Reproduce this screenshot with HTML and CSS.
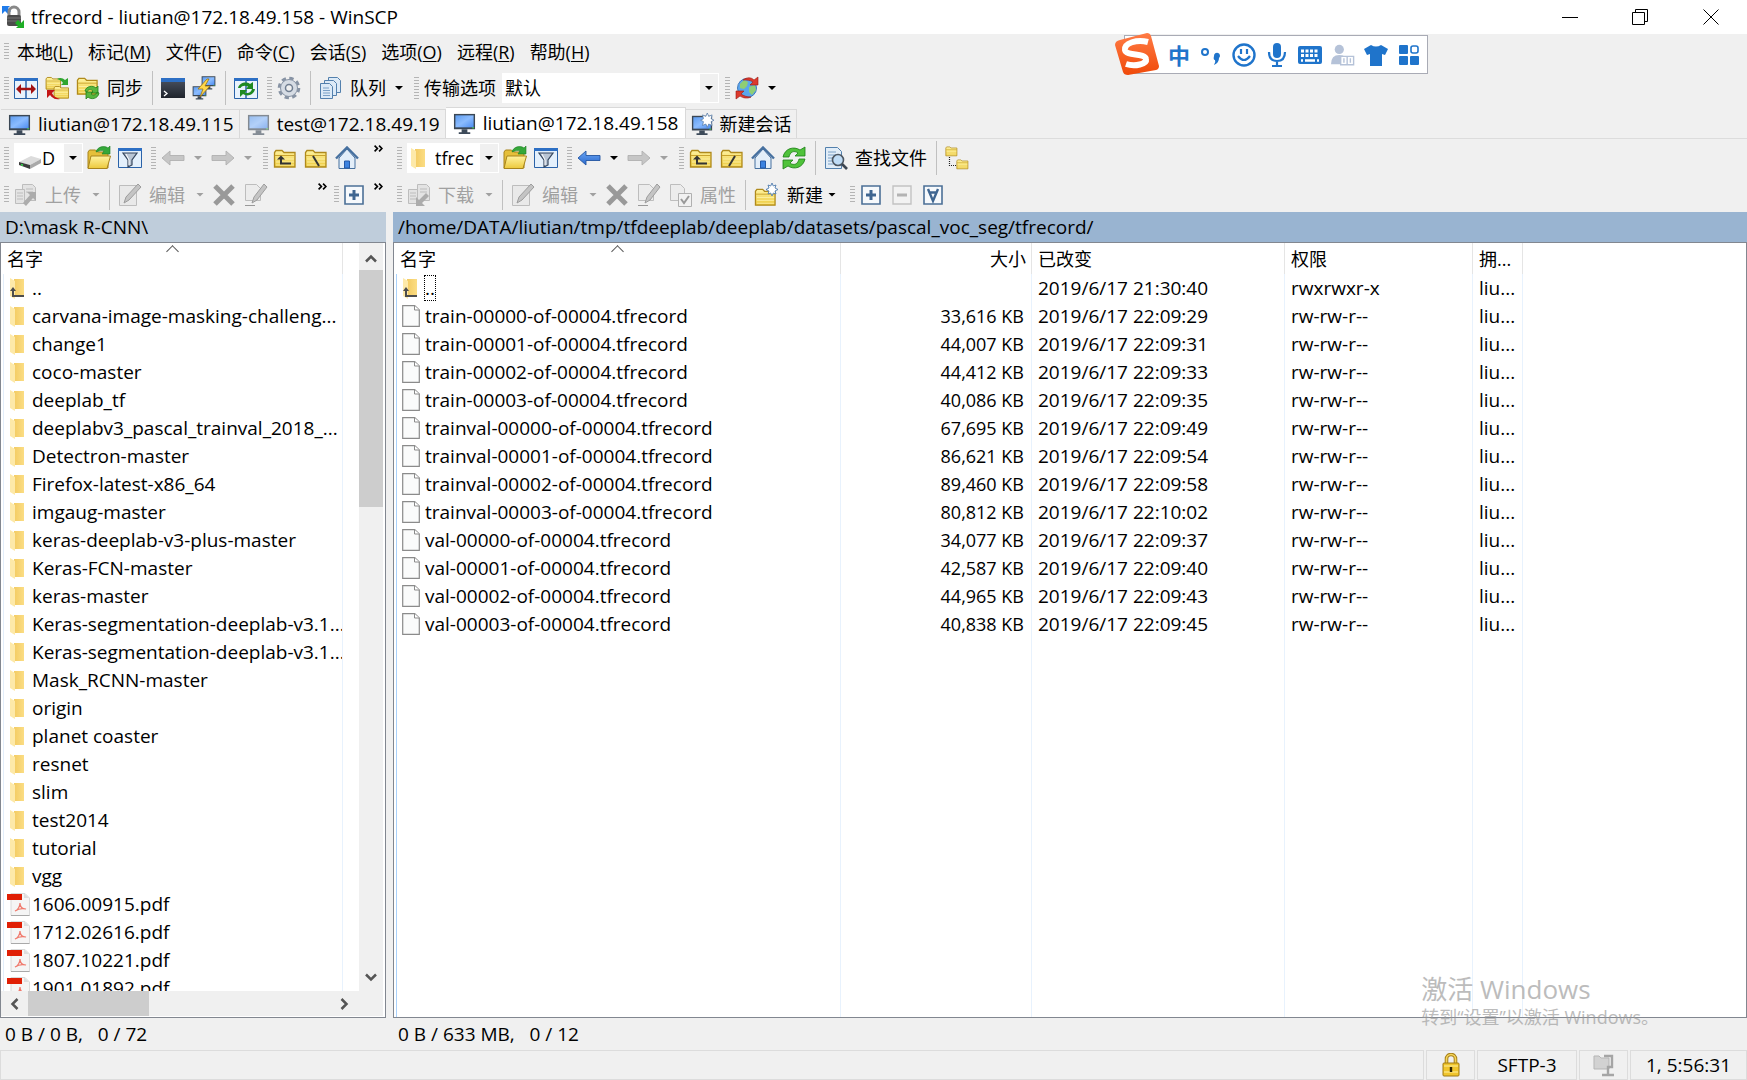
FILE: index.html
```html
<!DOCTYPE html>
<html lang="zh-CN">
<head>
<meta charset="utf-8">
<title>tfrecord - liutian@172.18.49.158 - WinSCP</title>
<link rel="stylesheet" href="styles.css">
</head>
<body>
<svg class="sprite" aria-hidden="true">
  <defs>
    <linearGradient id="gold" x1="0" y1="0" x2="0" y2="1"><stop offset="0" stop-color="#fff3a0"/><stop offset="1" stop-color="#ecc93c"/></linearGradient>
    <linearGradient id="screen" x1="0" y1="0" x2="1" y2="1"><stop offset="0" stop-color="#5f9df0"/><stop offset=".5" stop-color="#8bbcff"/><stop offset="1" stop-color="#4d8df0"/></linearGradient>
    <linearGradient id="flap" x1="0" y1="0" x2="1" y2="0"><stop offset="0" stop-color="#f3cb62"/><stop offset="1" stop-color="#fbdd84"/></linearGradient>
    <linearGradient id="sogou" x1="0" y1="0" x2="0" y2="1"><stop offset="0" stop-color="#ff7b45"/><stop offset="1" stop-color="#f04a0a"/></linearGradient>
    <linearGradient id="night" x1="0" y1="0" x2="0" y2="1"><stop offset="0" stop-color="#4a5260"/><stop offset="1" stop-color="#1f242c"/></linearGradient>
    <linearGradient id="blue" x1="0" y1="0" x2="0" y2="1"><stop offset="0" stop-color="#6aa6f5"/><stop offset="1" stop-color="#2a68cc"/></linearGradient>
  </defs>
  <symbol id="i-app" viewBox="0 0 24 24"><path d="M1 1h8L7 3l3 3-3 3-3-3-3 3z" fill="#1f7bea"/><path d="M8 11V7a5 5 0 0 1 10 0v4" fill="none" stroke="#888" stroke-width="3"/><rect x="6" y="10" width="14" height="11" rx="2" fill="#4c4c4c"/><path d="M6 13h14M6 16h14" stroke="#777"/><path d="M23 23h-8l2-2-3-3 3-3 3 3 3-3z" fill="#1fae26"/></symbol>
  <symbol id="i-compare" viewBox="0 0 24 24"><path d="M.5 2.500h23v20H.5z" fill="#e9f3fd" stroke="#2a62a8"/><path d="M0 2h24v3H0z" fill="#2d6fc4"/><path d="M12 5v18" stroke="#2a62a8" stroke-width="1.500"/><path d="M2 13l5-5v3.800h10V8l5 5-5 5v-3.800H7V18z" fill="#a31212"/></symbol>
  <symbol id="g-folder" viewBox="0 0 24 24"><path d="M1.500 20V5.500l1.500-2h6l2 2h11V20z" fill="url(#gold)" stroke="#b08a1c" stroke-width="1.300"/><path d="M2 8.500h20" stroke="#c9a32e"/><path d="M3 12h18M3 15h18M3 18h18" stroke="#fff6b8" stroke-width=".7"/></symbol>
  <symbol id="i-syncdir" viewBox="0 0 24 24"><use href="#g-folder" x="0" y="-1" width="17" height="17"/><use href="#g-folder" x="8" y="8" width="17" height="17"/><path d="M12 3c3-2 6-1 8 1l3-2v7h-7l2-2c-1-2-3-3-6-4z" fill="#2fa52f"/><path d="M15 23c-4 1-8-1-10-4l-3 3v-8h8l-3 3c1 3 4 5 8 6z" fill="#c41616"/></symbol>
  <symbol id="i-sync" viewBox="0 0 24 24"><use href="#g-folder" y="-1" width="23" height="23"/><path d="M9 15c1-5 8-6 11-3l2-2v7h-7l2-2c-2-2-5-2-6 1zM23 17c-1 6-8 7-11 4l-2 2v-7h7l-2 2c2 2 5 1 6-2z" fill="#58b63f" stroke="#24821d" stroke-width=".8"/></symbol>
  <symbol id="i-term" viewBox="0 0 24 24"><path d="M0 3h24v19H0z" fill="url(#night)"/><path d="M0 2h24v4H0z" fill="#2d6fc4"/><path d="M3 15l3 2.500-3 2.500" fill="none" stroke="#fff" stroke-width="1.300"/></symbol>
  <symbol id="i-monitor" viewBox="0 0 24 24"><path d="M1 2h22v16H1z" fill="#3b4754"/><path d="M2.500 3.500h19v12.500h-19z" fill="url(#screen)"/><path d="M9 18h6v3h3v2H6v-2h3z" fill="#3d4a59"/><path d="M20 16.500h2" stroke="#4be04b"/></symbol>
  <symbol id="i-putty" viewBox="0 0 24 24"><use href="#i-monitor" x="9" y="-1" width="15" height="15"/><use href="#i-monitor" x="0" y="9" width="15" height="15"/><path d="M15 3L6 13h5l-3 8 10-11h-5l4-7z" fill="#ffd84a" stroke="#9a7415" stroke-width=".8"/></symbol>
  <symbol id="i-refreshall" viewBox="0 0 24 24"><path d="M.5 2.500h23v20H.5z" fill="#e9f3fd" stroke="#2a62a8"/><path d="M0 2h24v3H0z" fill="#2d6fc4"/><path d="M12 5v18" stroke="#2a62a8" stroke-width="1.500"/><path d="M4 12c1-5 8-7 12-4l3-2v7h-7l2-2.500c-3-1.500-6-1-7.500 1.500zM21 13c-1 6-8 8-12 5l-3 3v-7h7l-2 2.500c3 1.500 6 0 7-3.500z" fill="#1f8a22"/></symbol>
  <symbol id="i-gear" viewBox="0 0 24 24"><circle cx="12" cy="12" r="9.500" fill="none" stroke="#8793a4" stroke-width="3.600" stroke-dasharray="4.200 3.260"/><circle cx="12" cy="12" r="8.500" fill="#d6dce4" stroke="#8793a4"/><circle cx="12" cy="12" r="3.500" fill="#f0f0f0" stroke="#6f7d90" stroke-width="1.500"/></symbol>
  <symbol id="i-queue" viewBox="0 0 24 24"><g fill="#dceaf7" stroke="#5380ad"><path d="M9.500 1.500h9l3 3v12h-12z"/><path d="M5.500 4.500h9l3 3v12h-12z"/><path d="M1.500 7.500h9l3 3v12h-12z"/></g><path d="M4 12h6M4 14.500h7M4 17h7M4 19.500h7" stroke="#7ba0c6"/></symbol>
  <symbol id="i-globe" viewBox="0 0 24 24"><circle cx="12" cy="12" r="9.500" fill="#5ba6ec" stroke="#3f79bd"/><path d="M5 8l4-4 4 2-1 4-3 3-4-1zM14 11l6-2 1 5-4 5-3-3z" fill="#8fce74"/><path d="M8 4c4-3 8-3 11 0l4-3v8h-8l3-3c-3-2-6-2-10-2zM16 21c-4 2-8 1-11-1l-4 3v-8h8l-3 3c3 2 6 3 10 3z" fill="#dc3a2d" stroke="#9c1a13" stroke-width=".6"/></symbol>
  <symbol id="i-newtab" viewBox="0 0 24 24"><use href="#i-monitor" y="1" width="23" height="23"/><path d="M17 0l1.500 3.500L22 2l-1 4 3 1.500L21 9l1 4-3.500-1.500L17 15l-1.500-3.500L12 13l1-4-3-1.500L13 6l-1-4 3.500 1.500z" fill="#fff" stroke="#587ca8" stroke-width=".8"/></symbol>
  <symbol id="i-drive" viewBox="0 0 24 24"><path d="M1 16l12-6 10 3-11 6z" fill="#dcdcdc"/><path d="M1 16l11 3v4L1 19z" fill="#3c3c3c"/><path d="M12 19l11-6v4l-11 6z" fill="#a9a9a9"/><path d="M3 18.500l2 .7" stroke="#32d84b" stroke-width="1.500"/></symbol>
  <symbol id="i-folder" viewBox="0 0 14 21"><path d="M4 1h10v18H4z" fill="url(#flap)"/><path d="M0 0l5 3v18l-5-3z" fill="#fde9a9"/></symbol>
  <symbol id="i-up" viewBox="0 0 14 21"><use href="#i-folder" width="14" height="21"/><path d="M3 11v7h11" fill="none" stroke="#4d4d4d" stroke-width="2"/><path d="M0 13l3-4 3 4z" fill="#4d4d4d"/></symbol>
  <symbol id="i-open" viewBox="0 0 24 24"><path d="M1 22V6l1.500-2h6l2 2H21v16z" fill="#e5bf3a" stroke="#a8841c"/><path d="M1 22.500L4 10h19.500L20 22.500z" fill="url(#gold)" stroke="#a8841c"/><path d="M9 6c1-5 8-7 12-4l2-2v8h-8l2-3c-3-1-5 0-8 1z" fill="#35a83a" stroke="#1c7d22" stroke-width=".6"/></symbol>
  <symbol id="i-filter" viewBox="0 0 24 24"><path d="M.5 2.500h23v19H.5z" fill="#e4f0fc" stroke="#2a62a8"/><path d="M0 2h24v3H0z" fill="#2d6fc4"/><path d="M5 7h14l-5 7v5l-4 2v-7z" fill="#b9c5d4" stroke="#36475e" stroke-width="1.200"/><path d="M8 8l3 6v5" stroke="#fff" fill="none"/></symbol>
  <symbol id="i-back" viewBox="0 0 24 24"><path d="M1 12l8-7v4.500h14v5H9V19z" fill="url(#blue)" stroke="#2455a0" stroke-width=".9"/></symbol>
  <symbol id="i-backoff" viewBox="0 0 24 24"><path d="M1 12l8-7v4.500h14v5H9V19z" fill="#c6c6c6" stroke="#b0b0b0" stroke-width=".9"/></symbol>
  <symbol id="i-fwdoff" viewBox="0 0 24 24"><path d="M23 12l-8-7v4.500H1v5h14V19z" fill="#c6c6c6" stroke="#b0b0b0" stroke-width=".9"/></symbol>
  <symbol id="i-parent" viewBox="0 0 24 24"><use href="#g-folder" y="1" width="24" height="24"/><path d="M8 11v6.500h10" fill="none" stroke="#333" stroke-width="2"/><path d="M4 13.500l4-4 4 4z" fill="#333"/></symbol>
  <symbol id="i-rootw" viewBox="0 0 24 24"><use href="#g-folder" y="1" width="24" height="24"/><path d="M9 10l6 10" stroke="#333" stroke-width="2"/></symbol>
  <symbol id="i-rootu" viewBox="0 0 24 24"><use href="#g-folder" y="1" width="24" height="24"/><path d="M15 10L9 20" stroke="#333" stroke-width="2"/></symbol>
  <symbol id="i-home" viewBox="0 0 24 24"><path d="M4 12v10.500h16V12l-8-9z" fill="#e3eef9" stroke="#46709f"/><path d="M1 12.500L12 1.500l11 11" fill="none" stroke="#46709f" stroke-width="2.400"/><path d="M9.500 15h5v7h-5z" fill="#3b82e0" stroke="#2358a8"/></symbol>
  <symbol id="i-refresh" viewBox="0 0 24 24"><path d="M1 11C3 2 12 0 18 4l5-3v9H13l3-3C12 4 8 6 7 11zM23 13c-2 9-11 11-17 7l-5 3v-9h10l-3 3c4 3 8 1 9-4z" fill="#4fc23a" stroke="#1d7d17" stroke-width=".8"/></symbol>
  <symbol id="i-find" viewBox="0 0 24 24"><path d="M1.500 1.500h12l4 4v17h-16z" fill="#e1edf8" stroke="#5380ad"/><path d="M4 6h8M4 9h8M4 12h5M4 15h4M4 18h5" stroke="#7ba0c6"/><circle cx="14" cy="14" r="5.500" fill="#bfdcf6" stroke="#4c5661" stroke-width="1.600"/><path d="M18 18l5 5" stroke="#3c4652" stroke-width="2.600"/></symbol>
  <symbol id="i-tree" viewBox="0 0 24 24"><use href="#g-folder" y="-1" width="13" height="13"/><use href="#g-folder" x="11" y="12" width="13" height="13"/><path d="M4.500 11v8.500H11" stroke="#222" stroke-width="1.200" stroke-dasharray="1 1" fill="none"/></symbol>
  <symbol id="i-upload" viewBox="0 0 24 24"><g fill="#e3e3e3" stroke="#bdbdbd"><path d="M8.500 1.500h10l3 3v13h-13z"/><path d="M1.500 6.500h9v14h-9z"/></g><path d="M3 10h6M3 13h6M3 16h6M12 6h7M12 9h7" stroke="#bdbdbd"/><path d="M22 9v9l-3-3-7 8-3-3 7-8-3-3z" fill="#acacac"/></symbol>
  <symbol id="i-download" viewBox="0 0 24 24"><g fill="#e3e3e3" stroke="#bdbdbd"><path d="M10.500 1.500h9l3 3v13h-12z"/><path d="M1.500 6.500h9v14h-9z"/></g><path d="M3 10h6M3 13h6M3 16h6M13 6h7M13 9h7" stroke="#bdbdbd"/><path d="M9 23v-9l3 3 7-7 3 3-7 7 3 3z" fill="#acacac"/></symbol>
  <symbol id="i-edit" viewBox="0 0 24 24"><path d="M1.500 2.500h17v20h-17z" fill="#e9e9e9" stroke="#bdbdbd"/><path d="M6 20l2-6L20 1l3 3L11 17z" fill="#c4c4c4" stroke="#9d9d9d"/></symbol>
  <symbol id="i-x" viewBox="0 0 24 24"><path d="M3 3l18 18M21 3L3 21" stroke="#999" stroke-width="5"/></symbol>
  <symbol id="i-rename" viewBox="0 0 24 24"><path d="M1.500 1.500h11l4 4v12h-15z" fill="#ececec" stroke="#bdbdbd"/><path d="M8 20l2-6L20 1l3 3L13 17z" fill="#c4c4c4" stroke="#9d9d9d"/><path d="M1 22.500h10" stroke="#999"/></symbol>
  <symbol id="i-props" viewBox="0 0 24 24"><path d="M1.500 1.500h10l4 4v12h-14z" fill="#ececec" stroke="#bdbdbd"/><path d="M9.500 10.500h13v13h-13z" fill="#f1f1f1" stroke="#b0b0b0"/><path d="M12 16l3 4 5-7" fill="none" stroke="#999" stroke-width="2"/></symbol>
  <symbol id="i-newdir" viewBox="0 0 24 24"><use href="#g-folder" x="0" y="3" width="23" height="23"/><path d="M18 0l1.300 3L22 2l-1 3 3 1.500L21 8l1 3-2.700-1L18 13l-1.300-3L14 11l1-3-3-1.500L15 5l-1-3 2.700 1z" fill="#fff" stroke="#4f7cae" stroke-width=".9"/></symbol>
  <symbol id="i-plus" viewBox="0 0 20 20"><path d="M1 1h18v18H1z" fill="#f6f9fc" stroke="#4c7097" stroke-width="1.600"/><path d="M10 5v10M5 10h10" stroke="#3f6691" stroke-width="3"/></symbol>
  <symbol id="i-minus" viewBox="0 0 20 20"><path d="M1 1h18v18H1z" fill="#f2f2f2" stroke="#c2c2c2" stroke-width="1.400"/><path d="M5 10h10" stroke="#b3b3b3" stroke-width="3"/></symbol>
  <symbol id="i-vee" viewBox="0 0 20 20"><path d="M1 1h18v18H1z" fill="#f6f9fc" stroke="#4c7097" stroke-width="1.600"/><path d="M5 4l5 12 5-12M6 7.500h8" fill="none" stroke="#3f6691" stroke-width="2.400"/></symbol>
  <symbol id="i-file" viewBox="0 0 18 22"><path d="M.7.700h12L17.300 5v16.300H.7z" fill="#fafbfb" stroke="#8b8b8b" stroke-width="1.200"/><path d="M12.500.700V5h4.800" fill="#fff" stroke="#8b8b8b"/></symbol>
  <symbol id="i-pdf" viewBox="0 0 23 23"><path d="M4 .5h14l4.500 4.500v17.500H4z" fill="#f5f5f5" stroke="#dadada"/><path d="M4 22.500h18.500" stroke="#a9a9a9"/><path d="M17 .5V5h5z" fill="#ddd"/><path d="M0 1h15v6H0z" fill="#e01f05"/><path d="M8 18c3-1 5-5 5-8 0 4 2 6 6 6-4-1-8 0-11 2z" fill="none" stroke="#f0796c" stroke-width="1.200"/></symbol>
  <symbol id="i-lock" viewBox="0 0 18 24"><path d="M4.500 11V6a4.500 4.500 0 0 1 9 0v5" fill="none" stroke="#a9821a" stroke-width="3.600"/><path d="M4.500 11V6a4.500 4.500 0 0 1 9 0v5" fill="none" stroke="#f4d45a" stroke-width="1.600"/><rect x="1" y="10" width="16" height="13" rx="1" fill="#f0c52c" stroke="#a07a12"/><path d="M2 13h14M2 19h14" stroke="#fff0a0"/><path d="M9 14v5" stroke="#2c2405" stroke-width="2.400"/></symbol>
  <symbol id="i-zip" viewBox="0 0 22 24"><path d="M1 3h5l2 2h8v11H1z" fill="#d2d2d2" stroke="#b5b5b5"/><path d="M11 3h8v11h-4v7M9 22h12" fill="none" stroke="#a5a5a5" stroke-width="2.400"/></symbol>
</svg>

<div class="app">
  <header class="titlebar">
    <svg class="ico"><use href="#i-app"/></svg>
    <h1>tfrecord - liutian@172.18.49.158 - WinSCP</h1>
    <div class="winbtns">
      <button aria-label="最小化"><svg viewBox="0 0 16 16"><path d="M0 8.500h16"/></svg></button>
      <button aria-label="还原"><svg viewBox="0 0 16 16"><path d="M.5 3.500h12v12H.5zM3.500 3.500v-3h12v12h-3"/></svg></button>
      <button aria-label="关闭"><svg viewBox="0 0 16 16"><path d="M.5.500l15 15M15.500.500l-15 15"/></svg></button>
    </div>
  </header>

  <nav class="menubar">
    <span class="grip short"></span>
    <button>本地(<u>L</u>)</button><button>标记(<u>M</u>)</button><button>文件(<u>F</u>)</button><button>命令(<u>C</u>)</button><button>会话(<u>S</u>)</button><button>选项(<u>O</u>)</button><button>远程(<u>R</u>)</button><button>帮助(<u>H</u>)</button>
  </nav>

  <div class="toolbar main">
    <div class="group">
      <span class="grip"></span>
      <button class="tool" aria-label="比较目录"><svg class="ico"><use href="#i-compare"/></svg></button>
      <button class="tool" aria-label="同步浏览"><svg class="ico"><use href="#i-syncdir"/></svg></button>
      <button class="tool"><svg class="ico"><use href="#i-sync"/></svg>同步</button>
      <span class="sep"></span>
      <button class="tool" aria-label="终端"><svg class="ico"><use href="#i-term"/></svg></button>
      <button class="tool" aria-label="PuTTY"><svg class="ico"><use href="#i-putty"/></svg></button>
      <span class="sep"></span>
      <button class="tool" aria-label="刷新两侧"><svg class="ico"><use href="#i-refreshall"/></svg></button>
    </div>
    <div class="group">
      <span class="grip"></span>
      <button class="tool" aria-label="选项"><svg class="ico"><use href="#i-gear"/></svg></button>
      <span class="sep"></span>
      <button class="tool"><svg class="ico"><use href="#i-queue"/></svg>队列<i class="caret"></i></button>
    </div>
    <div class="group">
      <span class="grip"></span>
      <label for="preset" class="preset-label">传输选项</label>
      <span class="combo preset"><select id="preset"><option>默认</option></select><i class="drop"></i></span>
    </div>
    <div class="group">
      <span class="grip"></span>
      <button class="tool" aria-label="保持更新"><svg class="ico"><use href="#i-globe"/></svg><i class="caret"></i></button>
    </div>
  </div>

  <div class="tabs" role="tablist">
    <button role="tab"><svg class="ico"><use href="#i-monitor"/></svg>liutian@172.18.49.115</button>
    <button role="tab" class="idle"><svg class="ico"><use href="#i-monitor"/></svg>test@172.18.49.19</button>
    <button role="tab" class="active" aria-selected="true"><svg class="ico"><use href="#i-monitor"/></svg>liutian@172.18.49.158</button>
    <button role="tab" class="cjk"><svg class="ico"><use href="#i-newtab"/></svg>新建会话</button>
  </div>

  <main class="panels">
    <section class="panel local">
      <div class="toolbar nav">
        <div class="group">
          <span class="grip"></span>
          <span class="combo drive"><select aria-label="驱动器"><option>D</option></select><svg class="ico"><use href="#i-drive"/></svg><i class="drop"></i></span>
          <button class="tool" aria-label="打开目录"><svg class="ico"><use href="#i-open"/></svg></button>
          <button class="tool" aria-label="过滤"><svg class="ico"><use href="#i-filter"/></svg></button>
        </div>
        <div class="group">
          <span class="grip"></span>
          <button class="tool off" aria-label="后退"><svg class="ico"><use href="#i-backoff"/></svg><i class="caret"></i></button>
          <button class="tool off" aria-label="前进"><svg class="ico"><use href="#i-fwdoff"/></svg><i class="caret"></i></button>
        </div>
        <div class="group">
          <span class="grip"></span>
          <button class="tool" aria-label="上级目录"><svg class="ico"><use href="#i-parent"/></svg></button>
          <button class="tool" aria-label="根目录"><svg class="ico"><use href="#i-rootw"/></svg></button>
          <button class="tool" aria-label="主目录"><svg class="ico"><use href="#i-home"/></svg></button>
        </div>
        <button class="more" aria-label="更多"><svg viewBox="0 0 8 6"><path d="M.5.500L3 3 .5 5.500M4.500.500L7 3 4.500 5.500"/></svg></button>
      </div>
      <div class="toolbar ops">
        <div class="group">
          <span class="grip short"></span>
          <button class="tool off"><svg class="ico"><use href="#i-upload"/></svg>上传<i class="caret"></i></button>
          <span class="sep"></span>
          <button class="tool off"><svg class="ico"><use href="#i-edit"/></svg>编辑<i class="caret"></i></button>
          <button class="tool off" aria-label="删除"><svg class="ico"><use href="#i-x"/></svg></button>
          <button class="tool off" aria-label="重命名"><svg class="ico"><use href="#i-rename"/></svg></button>
        </div>
        <button class="more" aria-label="更多"><svg viewBox="0 0 8 6"><path d="M.5.500L3 3 .5 5.500M4.500.500L7 3 4.500 5.500"/></svg></button>
        <div class="group">
          <span class="grip short"></span>
          <button class="tool" aria-label="选择"><svg class="box"><use href="#i-plus"/></svg></button>
        </div>
        <button class="more last" aria-label="更多"><svg viewBox="0 0 8 6"><path d="M.5.500L3 3 .5 5.500M4.500.500L7 3 4.500 5.500"/></svg></button>
      </div>
      <div class="path">D:\mask R-CNN\</div>
      <div class="list">
        <div class="view">
          <table>
            <colgroup><col class="c-local"><col></colgroup>
            <thead><tr><th class="sorted">名字</th><th></th></tr></thead>
            <tbody>
              <tr><td><svg class="dir"><use href="#i-up"/></svg>..</td><td></td></tr>
              <tr><td><svg class="dir"><use href="#i-folder"/></svg>carvana-image-masking-challeng...</td><td></td></tr>
              <tr><td><svg class="dir"><use href="#i-folder"/></svg>change1</td><td></td></tr>
              <tr><td><svg class="dir"><use href="#i-folder"/></svg>coco-master</td><td></td></tr>
              <tr><td><svg class="dir"><use href="#i-folder"/></svg>deeplab_tf</td><td></td></tr>
              <tr><td><svg class="dir"><use href="#i-folder"/></svg>deeplabv3_pascal_trainval_2018_...</td><td></td></tr>
              <tr><td><svg class="dir"><use href="#i-folder"/></svg>Detectron-master</td><td></td></tr>
              <tr><td><svg class="dir"><use href="#i-folder"/></svg>Firefox-latest-x86_64</td><td></td></tr>
              <tr><td><svg class="dir"><use href="#i-folder"/></svg>imgaug-master</td><td></td></tr>
              <tr><td><svg class="dir"><use href="#i-folder"/></svg>keras-deeplab-v3-plus-master</td><td></td></tr>
              <tr><td><svg class="dir"><use href="#i-folder"/></svg>Keras-FCN-master</td><td></td></tr>
              <tr><td><svg class="dir"><use href="#i-folder"/></svg>keras-master</td><td></td></tr>
              <tr><td><svg class="dir"><use href="#i-folder"/></svg>Keras-segmentation-deeplab-v3.1...</td><td></td></tr>
              <tr><td><svg class="dir"><use href="#i-folder"/></svg>Keras-segmentation-deeplab-v3.1...</td><td></td></tr>
              <tr><td><svg class="dir"><use href="#i-folder"/></svg>Mask_RCNN-master</td><td></td></tr>
              <tr><td><svg class="dir"><use href="#i-folder"/></svg>origin</td><td></td></tr>
              <tr><td><svg class="dir"><use href="#i-folder"/></svg>planet coaster</td><td></td></tr>
              <tr><td><svg class="dir"><use href="#i-folder"/></svg>resnet</td><td></td></tr>
              <tr><td><svg class="dir"><use href="#i-folder"/></svg>slim</td><td></td></tr>
              <tr><td><svg class="dir"><use href="#i-folder"/></svg>test2014</td><td></td></tr>
              <tr><td><svg class="dir"><use href="#i-folder"/></svg>tutorial</td><td></td></tr>
              <tr><td><svg class="dir"><use href="#i-folder"/></svg>vgg</td><td></td></tr>
              <tr><td><svg class="pdf"><use href="#i-pdf"/></svg>1606.00915.pdf</td><td></td></tr>
              <tr><td><svg class="pdf"><use href="#i-pdf"/></svg>1712.02616.pdf</td><td></td></tr>
              <tr><td><svg class="pdf"><use href="#i-pdf"/></svg>1807.10221.pdf</td><td></td></tr>
              <tr><td><svg class="pdf"><use href="#i-pdf"/></svg>1901.01892.pdf</td><td></td></tr>
            </tbody>
          </table>
        </div>
        <div class="vbar">
          <svg viewBox="0 0 12 9"><path d="M1 7.500l5-5 5 5"/></svg>
          <div class="track"><div class="thumb"></div></div>
          <svg viewBox="0 0 12 9"><path d="M1 1.500l5 5 5-5"/></svg>
        </div>
        <div class="hbar">
          <svg viewBox="0 0 9 12"><path d="M7.500 1l-5 5 5 5"/></svg>
          <div class="track"><div class="thumb"></div></div>
          <svg viewBox="0 0 9 12"><path d="M1.500 1l5 5-5 5"/></svg>
        </div>
      </div>
      <div class="count">0 B / 0 B,&nbsp;&nbsp; 0 / 72</div>
    </section>

    <section class="panel remote">
      <div class="toolbar nav">
        <div class="group">
          <span class="grip"></span>
          <span class="combo dirsel"><select aria-label="目录"><option>tfrec</option></select><svg class="dir"><use href="#i-folder"/></svg><i class="drop"></i></span>
          <button class="tool" aria-label="打开目录"><svg class="ico"><use href="#i-open"/></svg></button>
          <button class="tool" aria-label="过滤"><svg class="ico"><use href="#i-filter"/></svg></button>
        </div>
        <div class="group">
          <span class="grip"></span>
          <button class="tool" aria-label="后退"><svg class="ico"><use href="#i-back"/></svg><i class="caret"></i></button>
          <button class="tool off" aria-label="前进"><svg class="ico"><use href="#i-fwdoff"/></svg><i class="caret"></i></button>
        </div>
        <div class="group">
          <span class="grip"></span>
          <button class="tool" aria-label="上级目录"><svg class="ico"><use href="#i-parent"/></svg></button>
          <button class="tool" aria-label="根目录"><svg class="ico"><use href="#i-rootu"/></svg></button>
          <button class="tool" aria-label="主目录"><svg class="ico"><use href="#i-home"/></svg></button>
          <button class="tool" aria-label="刷新"><svg class="ico"><use href="#i-refresh"/></svg></button>
          <span class="sep"></span>
          <button class="tool"><svg class="ico"><use href="#i-find"/></svg>查找文件</button>
          <span class="sep"></span>
          <button class="tool" aria-label="目录树"><svg class="ico"><use href="#i-tree"/></svg></button>
        </div>
      </div>
      <div class="toolbar ops">
        <div class="group">
          <span class="grip short"></span>
          <button class="tool off"><svg class="ico"><use href="#i-download"/></svg>下载<i class="caret"></i></button>
          <span class="sep"></span>
          <button class="tool off"><svg class="ico"><use href="#i-edit"/></svg>编辑<i class="caret"></i></button>
          <button class="tool off" aria-label="删除"><svg class="ico"><use href="#i-x"/></svg></button>
          <button class="tool off" aria-label="重命名"><svg class="ico"><use href="#i-rename"/></svg></button>
          <button class="tool off"><svg class="ico"><use href="#i-props"/></svg>属性</button>
          <span class="sep"></span>
          <button class="tool tight"><svg class="ico"><use href="#i-newdir"/></svg>新建<i class="caret"></i></button>
        </div>
        <div class="group boxes">
          <span class="grip short"></span>
          <button class="tool" aria-label="选择"><svg class="box"><use href="#i-plus"/></svg></button>
          <button class="tool off" aria-label="取消选择"><svg class="box"><use href="#i-minus"/></svg></button>
          <button class="tool" aria-label="全选"><svg class="box"><use href="#i-vee"/></svg></button>
        </div>
      </div>
      <div class="path">/home/DATA/liutian/tmp/tfdeeplab/deeplab/datasets/pascal_voc_seg/tfrecord/</div>
      <div class="list">
        <div class="view">
          <table>
            <colgroup><col class="c-name"><col class="c-size"><col class="c-date"><col class="c-perm"><col class="c-own"><col></colgroup>
            <thead><tr><th class="sorted">名字</th><th class="num">大小</th><th>已改变</th><th>权限</th><th>拥...</th><th></th></tr></thead>
            <tbody>
              <tr><td><svg class="dir"><use href="#i-up"/></svg><span class="focus">..</span></td><td class="num"></td><td>2019/6/17 21:30:40</td><td>rwxrwxr-x</td><td>liu...</td><td></td></tr>
              <tr><td><svg class="file"><use href="#i-file"/></svg>train-00000-of-00004.tfrecord</td><td class="num">33,616 KB</td><td>2019/6/17 22:09:29</td><td>rw-rw-r--</td><td>liu...</td><td></td></tr>
              <tr><td><svg class="file"><use href="#i-file"/></svg>train-00001-of-00004.tfrecord</td><td class="num">44,007 KB</td><td>2019/6/17 22:09:31</td><td>rw-rw-r--</td><td>liu...</td><td></td></tr>
              <tr><td><svg class="file"><use href="#i-file"/></svg>train-00002-of-00004.tfrecord</td><td class="num">44,412 KB</td><td>2019/6/17 22:09:33</td><td>rw-rw-r--</td><td>liu...</td><td></td></tr>
              <tr><td><svg class="file"><use href="#i-file"/></svg>train-00003-of-00004.tfrecord</td><td class="num">40,086 KB</td><td>2019/6/17 22:09:35</td><td>rw-rw-r--</td><td>liu...</td><td></td></tr>
              <tr><td><svg class="file"><use href="#i-file"/></svg>trainval-00000-of-00004.tfrecord</td><td class="num">67,695 KB</td><td>2019/6/17 22:09:49</td><td>rw-rw-r--</td><td>liu...</td><td></td></tr>
              <tr><td><svg class="file"><use href="#i-file"/></svg>trainval-00001-of-00004.tfrecord</td><td class="num">86,621 KB</td><td>2019/6/17 22:09:54</td><td>rw-rw-r--</td><td>liu...</td><td></td></tr>
              <tr><td><svg class="file"><use href="#i-file"/></svg>trainval-00002-of-00004.tfrecord</td><td class="num">89,460 KB</td><td>2019/6/17 22:09:58</td><td>rw-rw-r--</td><td>liu...</td><td></td></tr>
              <tr><td><svg class="file"><use href="#i-file"/></svg>trainval-00003-of-00004.tfrecord</td><td class="num">80,812 KB</td><td>2019/6/17 22:10:02</td><td>rw-rw-r--</td><td>liu...</td><td></td></tr>
              <tr><td><svg class="file"><use href="#i-file"/></svg>val-00000-of-00004.tfrecord</td><td class="num">34,077 KB</td><td>2019/6/17 22:09:37</td><td>rw-rw-r--</td><td>liu...</td><td></td></tr>
              <tr><td><svg class="file"><use href="#i-file"/></svg>val-00001-of-00004.tfrecord</td><td class="num">42,587 KB</td><td>2019/6/17 22:09:40</td><td>rw-rw-r--</td><td>liu...</td><td></td></tr>
              <tr><td><svg class="file"><use href="#i-file"/></svg>val-00002-of-00004.tfrecord</td><td class="num">44,965 KB</td><td>2019/6/17 22:09:43</td><td>rw-rw-r--</td><td>liu...</td><td></td></tr>
              <tr><td><svg class="file"><use href="#i-file"/></svg>val-00003-of-00004.tfrecord</td><td class="num">40,838 KB</td><td>2019/6/17 22:09:45</td><td>rw-rw-r--</td><td>liu...</td><td></td></tr>
              <tr class="filler"><td></td><td></td><td></td><td></td><td></td><td></td></tr>
            </tbody>
          </table>
        </div>
      </div>
      <div class="count">0 B / 633 MB,&nbsp;&nbsp; 0 / 12</div>
    </section>
  </main>

  <footer class="status">
    <div class="cell hint"></div>
    <div class="cell small"><svg class="lock"><use href="#i-lock"/></svg></div>
    <div class="cell proto">SFTP-3</div>
    <div class="cell small"><svg class="zip"><use href="#i-zip"/></svg></div>
    <div class="cell time">1, 5:56:31</div>
  </footer>
</div>

<aside class="ime">
  <svg class="s" viewBox="0 0 44 42"><path d="M5 7L32 0q3 0 4 3l8 30q0 3-3 4l-28 5q-4 0-5-3L0 12q0-4 5-5z" fill="url(#sogou)"/><path d="M33 9C22 6 9 10 10 17c1 6 20 3 21 9 1 5-11 8-20 5" fill="none" stroke="#fff" stroke-width="6"/></svg>
  <span class="zh">中</span>
  <svg viewBox="0 0 24 24"><circle cx="6" cy="9" r="3" fill="none" stroke="#1f74cb" stroke-width="2"/><path d="M15 13a3 3 0 1 1 5 2q0 5-5 7 2-3 1-5-2 0-1-4z" fill="#1f74cb"/></svg>
  <svg viewBox="0 0 24 24"><circle cx="12" cy="12" r="10.500" fill="none" stroke="#1f74cb" stroke-width="2.400"/><path d="M9 6v5M15 6v5M6 13q6 8 12 0" fill="none" stroke="#1f74cb" stroke-width="2.200"/></svg>
  <svg viewBox="0 0 24 24"><rect x="8" y="0" width="8" height="15" rx="4" fill="#1f74cb"/><path d="M4 9q0 9 8 9t8-9M12 18v5M7 23h10" fill="none" stroke="#1f74cb" stroke-width="2.200"/></svg>
  <svg viewBox="0 0 24 24"><rect x="0" y="3" width="24" height="18" rx="2" fill="#1f74cb"/><path d="M3 8h18M3 12.500h18" stroke="#fff" stroke-width="3" stroke-dasharray="3 1.500"/><path d="M3 17.500h2M7 17.500h10M19 17.500h2" stroke="#fff" stroke-width="2.400"/></svg>
  <svg viewBox="0 0 26 24"><circle cx="9" cy="6" r="5" fill="#b5c2d8"/><path d="M0 22q0-10 9-10t9 10z" fill="#b5c2d8"/><path d="M10.500 13.500h14v9h-14zM14 15.500v5M17.500 13v10M21 15.500v5" fill="#fff" stroke="#b5c2d8" stroke-width="1.500"/></svg>
  <svg viewBox="0 0 24 24"><path d="M7 2q5 3 10 0l7 4-3 6-3-1v12H6V11l-3 1-3-6z" fill="#1f74cb"/></svg>
  <svg viewBox="0 0 24 24"><g fill="#1f74cb"><rect x="2" y="2" width="9" height="9" rx="1"/><rect x="2" y="13" width="9" height="9" rx="1"/><rect x="13" y="13" width="9" height="9" rx="1"/></g><rect x="14" y="3" width="7" height="7" rx="2" fill="none" stroke="#1f74cb" stroke-width="1.600"/></svg>
</aside>

<div class="watermark"><p>激活 Windows</p><p class="sub">转到“设置”以激活 Windows。</p></div>
</body>
</html>
```
FILE: styles.css
```css
* { box-sizing: border-box; }

body {
  margin: 0;
  background: #f0f0f0;
  color: #000;
  font: 19px/24px "Open Sans", "Noto Sans CJK SC", sans-serif;
}

button, select {
  margin: 0;
  padding: 0;
  border: 0;
  background: none;
  color: inherit;
  font: inherit;
}

svg { flex: none; display: block; }
.sprite { position: absolute; width: 0; height: 0; }
.ico { width: 24px; height: 24px; }

.app {
  display: flex;
  flex-direction: column;
  height: 100vh;
  overflow: hidden;
}

/* Title bar */
.titlebar {
  display: flex;
  align-items: center;
  gap: 6px;
  flex: none;
  height: 34px;
  padding-left: 1px;
  background: #fff;
}
.titlebar h1 { margin: 0; font-size: 19px; font-weight: 400; white-space: nowrap; }
.winbtns { display: flex; margin-left: auto; }
.winbtns button {
  display: grid;
  place-items: center;
  width: 70px;
  height: 34px;
}
.winbtns button:last-child { width: 72px; }
.winbtns svg { width: 16px; height: 16px; fill: none; stroke: #000; }

/* Menu bar */
.menubar {
  display: flex;
  align-items: center;
  flex: none;
  height: 35px;
  padding-left: 4px;
  font-size: 18px;
}
.menubar .grip { margin-right: 8px; }
.menubar button { margin-right: 15px; }
.menubar u { text-underline-offset: 2px; text-decoration-thickness: 1px; }

/* Toolbars */
.toolbar {
  display: flex;
  align-items: center;
  flex: none;
  height: 38px;
  padding-left: 4px;
  font-size: 18px;
}
.toolbar.ops { height: 35px; }
.group { display: flex; align-items: center; height: 100%; margin-right: 2px; }
.grip {
  flex: none;
  width: 5px;
  height: 23px;
  margin-right: 5px;
  background: repeating-linear-gradient(#b4b4b4 0 1px, transparent 1px 3px);
}
.grip.short { height: 17px; }
.tool {
  display: flex;
  align-items: center;
  gap: 7px;
  margin-right: 7px;
  white-space: nowrap;
}
.tool.off { color: #a0a0a0; }
.sep {
  width: 1px;
  height: 34px;
  margin: 0 8px 0 2px;
  background: #c0c0c0;
}
.caret {
  width: 8px;
  height: 4px;
  margin: 0 2px;
  background: currentColor;
  clip-path: polygon(0 0, 100% 0, 50% 100%);
}
.ops .tool { margin-right: 8px; }
.ops .sep { height: 30px; margin: 0 8px 0 1px; }
.ops .caret { margin: 0 0 0 4px; }
.ops .tight { gap: 9px; }
.ops .tight .caret { margin: 0 2px 0 -4px; }
.box { width: 20px; height: 20px; }
.boxes { margin-left: 2px; }
.boxes .grip { margin-right: 6px; }
.ops .boxes .tool { margin-right: 11px; }
.more { align-self: flex-start; margin: 6px 3px 0 auto; }
.more svg { width: 9px; height: 7px; fill: none; stroke: #000; stroke-width: 1.5; }
.more + .group { margin-left: 4px; }
.more.last { margin-left: 0; }

.combo { display: grid; align-items: center; height: 30px; margin-right: 4px; background: #fff; }
.combo > * { grid-area: 1 / 1; }
.combo select { appearance: none; width: 100%; height: 30px; border-radius: 0; }
.combo svg { margin-left: 4px; pointer-events: none; }
.combo .drop {
  justify-self: end;
  display: grid;
  place-items: center;
  width: 18px;
  height: 28px;
  margin-right: 1px;
  background: #f0f0f0;
  pointer-events: none;
}
.drop::after {
  content: "";
  width: 8px;
  height: 4px;
  background: #000;
  clip-path: polygon(0 0, 100% 0, 50% 100%);
}
.preset { width: 217px; }
.preset select { padding-left: 3px; }
.preset-label { margin-right: 6px; }
.drive { width: 69px; }
.dirsel { width: 92px; }
.drive select, .dirsel select { padding-left: 28px; }

/* Session tabs */
.tabs {
  display: flex;
  align-items: flex-end;
  flex: none;
  height: 32px;
  padding-left: 1px;
  border-bottom: 1px solid #dcdcdc;
}
.tabs button {
  display: flex;
  align-items: center;
  gap: 7px;
  height: 29px;
  padding: 0 5px 0 7px;
  border: solid #d9d9d9;
  border-width: 1px 1px 0 0;
  white-space: nowrap;
}
.tabs .ico { width: 23px; height: 23px; }
.tabs .idle .ico { opacity: .6; }
.tabs .active { align-self: stretch; height: auto; padding: 0 7px; background: #fff; }
.tabs .cjk { gap: 5px; padding-left: 5px; font-size: 18px; }

/* Panels */
.panels {
  display: grid;
  grid-template-columns: 386px minmax(0, 1fr);
  column-gap: 7px;
  flex: 1;
  min-height: 0;
}
.panel { display: flex; flex-direction: column; min-width: 0; min-height: 0; }
.path {
  flex: none;
  height: 30px;
  padding: 0 5px;
  background: #bfcddb;
  line-height: 30px;
  white-space: nowrap;
  overflow: hidden;
}
.remote .path { background: #99b4d1; }
.count { flex: none; height: 32px; padding-left: 5px; line-height: 32px; }

.list {
  display: grid;
  grid-template: minmax(0, 1fr) / minmax(0, 1fr);
  flex: 1;
  min-height: 0;
  border: 1px solid #828790;
  background: #fff;
}
.local .list { grid-template: minmax(0, 1fr) 25px / minmax(0, 1fr) 24px; padding: 0 2px 1px 0; }
.view { overflow: hidden; }
.view table {
  width: 100%;
  height: 100%;
  border-collapse: separate;
  border-spacing: 0;
  table-layout: fixed;
}
.c-local { width: 342px; }
.c-name { width: 447px; }
.c-size { width: 191px; }
.c-date { width: 253px; }
.c-perm { width: 188px; }
.c-own { width: 50px; }

th, td { padding: 0 6px; text-align: left; white-space: nowrap; overflow: hidden; }
th {
  position: relative;
  height: 31px;
  border-right: 1px solid #e5e5e5;
  font-size: 18px;
  font-weight: 400;
}
td { height: 28px; border-right: 1px solid #e8f2fd; }
td:first-child {
  display: flex;
  align-items: center;
  padding-right: 0;
  background: linear-gradient(#e3eefa, #e3eefa) 2px 0 / 1px 100% no-repeat;
}
.remote td:first-child { background-image: linear-gradient(#a9d1fb, #a9d1fb); }
th:last-child, td:last-child { border-right: 0; }
th.num { padding-right: 5px; text-align: right; }
td.num { padding-right: 7px; text-align: right; font-size: 18px; }
.filler td { height: auto; }
.filler td:first-child { display: table-cell; }
.sorted::before {
  content: "";
  position: absolute;
  top: 4px;
  left: 50%;
  width: 8px;
  height: 8px;
  margin-left: -4px;
  border: solid #555;
  border-width: 1px 0 0 1px;
  transform: rotate(45deg);
}
.focus { outline: 1px dotted #000; }
.dir { width: 14px; height: 21px; margin: 0 8px 0 3px; }
.file { width: 18px; height: 22px; margin: 0 5px 0 2px; }
.pdf { width: 23px; height: 23px; margin-right: 2px; }

/* Scroll bars */
.vbar, .hbar { display: flex; align-items: center; background: #f0f0f0; }
.vbar { flex-direction: column; padding: 11px 0 9px; gap: 7px; }
.hbar { grid-column: 1 / -1; padding: 0 34px 0 9px; gap: 9px; }
.vbar > svg { width: 12px; height: 9px; }
.hbar > svg { width: 9px; height: 12px; }
.vbar > svg, .hbar > svg { fill: none; stroke: #555; stroke-width: 2.5; }
.track { flex: 1; align-self: stretch; }
.thumb { background: #cdcdcd; }
.vbar .thumb { height: 34%; }
.hbar .thumb { width: 40%; height: 100%; }

/* Status bar */
.status { display: flex; gap: 2px; flex: none; height: 30px; }
.cell {
  display: flex;
  align-items: center;
  justify-content: center;
  border: 1px solid #dcdcdc;
}
.hint { flex: 1; }
.small { width: 49px; }
.proto { width: 100px; }
.time { width: 117px; }
.lock { width: 18px; height: 24px; }
.zip { width: 22px; height: 24px; }

/* Input-method bar floating over the window */
.ime {
  position: absolute;
  top: 35px;
  right: 319px;
  display: flex;
  align-items: center;
  gap: 9px;
  height: 39px;
  padding-right: 6px;
  border: 1px solid #a9abb5;
  background: #fff;
}
.ime svg { width: 24px; height: 24px; }
.ime .s { width: 44px; height: 42px; margin: -2px 0 0 -10px; }
.zh { color: #1f74cb; font-size: 22px; font-weight: 700; }

/* Activation notice floating over the list */
.watermark {
  position: absolute;
  right: 88px;
  bottom: 51px;
  color: #999;
  opacity: .65;
  pointer-events: none;
}
.watermark p { margin: 0; font-size: 26px; line-height: 32px; }
.watermark .sub { font-size: 18px; line-height: 24px; }
```
